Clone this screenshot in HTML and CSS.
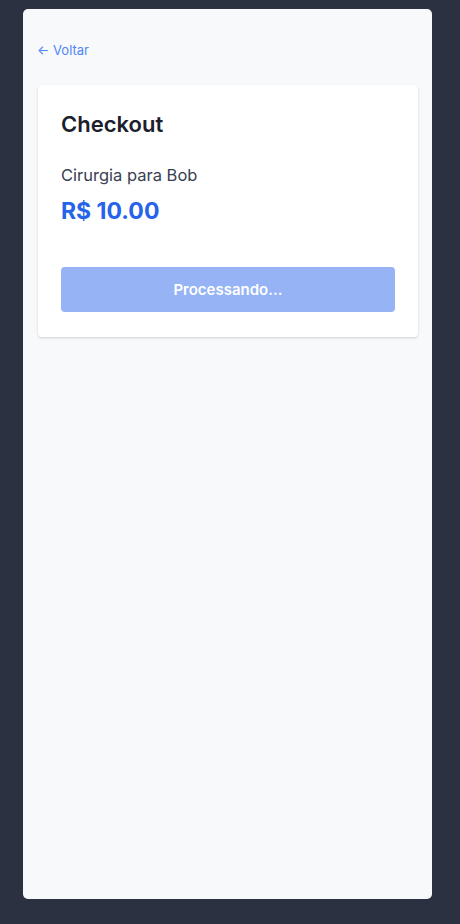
FILE: index.html
```html
<!DOCTYPE html>
<html lang="pt-BR">
<head>
<meta charset="utf-8">
<title>Checkout</title>
<link rel="stylesheet" href="styles.css">
</head>
<body>
<div class="panel">
  <a class="back" href="#">← Voltar</a>
  <div class="card">
    <h1 class="title">Checkout</h1>
    <p class="item">Cirurgia para Bob</p>
    <p class="price">R$ 10.00</p>
    <button class="pay" disabled>Processando...</button>
  </div>
</div>
</body>
</html>
```
FILE: styles.css
```css
html, body {
  margin: 0;
  padding: 0;
  height: 100%;
}
body {
  background: #2c3142;
  font-family: Inter, "Noto Sans", "Liberation Sans", sans-serif;
  padding: 9px 28px 25px 23px;
  box-sizing: border-box;
}
.panel {
  background: #f8f9fb;
  border-radius: 5px;
  height: 100%;
  box-sizing: border-box;
  padding: 31px 14px 0 15px;
}
.back {
  display: block;
  color: #4f86f7;
  text-decoration: none;
  font-size: 13px;
  line-height: 20px;
  margin-left: -1px;
}
.card {
  margin-top: 25px;
  background: #ffffff;
  border-radius: 4px;
  box-shadow: 0 1px 3px rgba(0,0,0,0.12), 0 1px 2px rgba(0,0,0,0.06);
  padding: 24px 23px 25px 23px;
}
.title {
  margin: 0;
  font-size: 22px;
  line-height: 30px;
  font-weight: 600;
  color: #1a202c;
}
.item {
  margin: 24px 0 0;
  font-size: 16.5px;
  line-height: 24px;
  color: #374151;
}
.price {
  margin: 10px 0 0;
  font-size: 23px;
  line-height: 28px;
  font-weight: 700;
  color: #2563eb;
}
.pay {
  display: block;
  width: 100%;
  margin-top: 42px;
  height: 45px;
  border: none;
  border-radius: 4px;
  background: #95b3f5;
  color: #ffffff;
  font-family: inherit;
  font-size: 15px;
  font-weight: 600;
}
```
